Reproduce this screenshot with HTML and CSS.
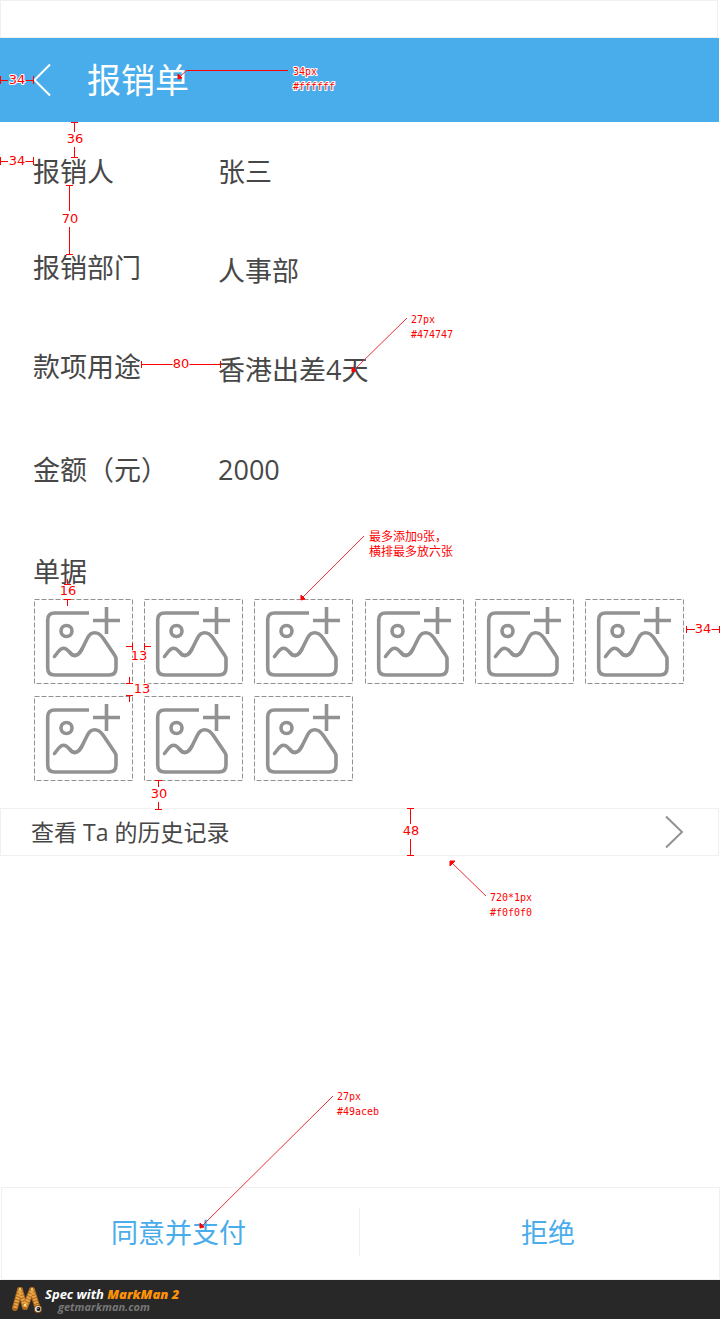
FILE: index.html
```html
<!DOCTYPE html>
<html lang="zh-CN">
<head>
<meta charset="utf-8">
<meta name="viewport" content="width=device-width, initial-scale=1">
<title>报销单</title>
<link rel="stylesheet" href="styles.css">
</head>
<body>
<svg class="defs" aria-hidden="true">
  <symbol id="add-photo" viewBox="0 0 99 85">
    <rect class="dash" x="0.5" y="0.5" width="98" height="84"/>
    <path class="thick flat" d="M55 14H20.700Q13.700 14 13.700 21V69Q13.700 76 20.700 76H75Q82 76 82 69V60Q82 58 80.500 56L69 39C64 32 57 32 53.500 39L48 50C44 58 39 58 35.500 53"/>
    <path class="thick" d="M48 50C44 58 39 58 35.500 53C31 48 28 48 24 53L20.500 57.500"/>
    <circle class="thick" cx="32.500" cy="32" r="5.500"/>
    <path class="thick flat" d="M72.500 8V35M59 21.500H86"/>
  </symbol>
</svg>
<div class="page">
  <div class="statusbar"></div>
  <header class="header">
    <button class="back" type="button" aria-label="返回"><svg width="18" height="34" viewBox="0 0 18 34"><path d="M17 1.500L1.500 17L17 32.500"/></svg></button>
    <h1 class="title">报销单</h1>
  </header>
  <main class="main">
    <dl class="fields">
      <div class="field"><dt>报销人</dt><dd>张三</dd></div>
      <div class="field field-low"><dt>报销部门</dt><dd>人事部</dd></div>
      <div class="field field-low"><dt>款项用途</dt><dd>香港出差4天</dd></div>
      <div class="field"><dt>金额（元）</dt><dd>2000</dd></div>
    </dl>
    <h2 class="subtitle">单据</h2>
    <div class="photos">
      <button class="photo" type="button" aria-label="添加单据 1"><svg><use href="#add-photo"/></svg></button>
      <button class="photo" type="button" aria-label="添加单据 2"><svg><use href="#add-photo"/></svg></button>
      <button class="photo" type="button" aria-label="添加单据 3"><svg><use href="#add-photo"/></svg></button>
      <button class="photo" type="button" aria-label="添加单据 4"><svg><use href="#add-photo"/></svg></button>
      <button class="photo" type="button" aria-label="添加单据 5"><svg><use href="#add-photo"/></svg></button>
      <button class="photo" type="button" aria-label="添加单据 6"><svg><use href="#add-photo"/></svg></button>
      <button class="photo" type="button" aria-label="添加单据 7"><svg><use href="#add-photo"/></svg></button>
      <button class="photo" type="button" aria-label="添加单据 8"><svg><use href="#add-photo"/></svg></button>
      <button class="photo" type="button" aria-label="添加单据 9"><svg><use href="#add-photo"/></svg></button>
    </div>
    <a class="history" href="#history"><span>查看 Ta 的历史记录</span><svg width="20" height="34" viewBox="0 0 20 34"><path d="M2 1.500L18 17L2 32.500"/></svg></a>
  </main>
  <div class="actions">
    <button class="action" type="button">同意并支付</button>
    <button class="action action-reject" type="button">拒绝</button>
  </div>
  <footer class="credit">
    <svg class="logo" width="32" height="30" viewBox="0 0 32 30" aria-hidden="true">
      <g class="worm"><path d="M4 23L9 5"/><path d="M9 5L14 22"/><path d="M14 22L21 5"/><path d="M21 5L27 24"/></g>
      <g class="rings"><path d="M4 23L9 5"/><path d="M9 5L14 22"/><path d="M14 22L21 5"/><path d="M21 5L27 24"/></g>
      <circle cx="27" cy="24" r="4" fill="#8f5516"/><circle cx="27" cy="24" r="3" fill="#eee"/><circle cx="27.500" cy="24" r="2" fill="#111"/><circle cx="27" cy="23.500" r="0.600" fill="#fff"/>
      <circle cx="9" cy="4" r="1" fill="#ffe28a"/><circle cx="21" cy="4" r="1" fill="#ffe28a"/><circle cx="14" cy="20" r="1.200" fill="#ffe28a"/>
    </svg>
    <div class="credit-text"><p class="credit-name">Spec with <b>MarkMan 2</b></p><p class="credit-site">getmarkman.com</p></div>
  </footer>

  <svg class="notes" width="720" height="1319" viewBox="0 0 720 1319">
    <g class="rule">
      <path d="M0.500 76V84M33.500 76V84M0 80.500H8M25 80.500H34"/>
      <path d="M0.500 157V165M33.500 157V165M0 161.500H8M25 161.500H34"/>
      <path d="M71 122.500H78M71 157.500H78M74.500 122V132M74.500 147V158"/>
      <path d="M66 185.500H73M66 254.500H73M69.500 185V211M69.500 227V254"/>
      <path d="M141.500 361V368M220.500 361V368M141 364.500H173M189 364.500H221"/>
      <path d="M64 584.500H71M67.500 579V584M64 599.500H71M67.500 599V606"/>
      <path d="M132.500 643V650M126 646.500H133M144.500 643V650M144 646.500H151"/>
      <path d="M126 683.500H133M129.500 677V684M126 695.500H133M129.500 695V702"/>
      <path d="M155 780.500H162M158.500 780V787M155 809.500H162M158.500 802V809"/>
      <path d="M407 808.500H414M407 855.500H414M410.500 808V824M410.500 839V855"/>
      <path d="M686.500 626V633M719.500 626V633M686 629.500H695M711 629.500H720"/>
      <path d="M288 70.500H186"/>
    </g>
    <g class="pointer">
      <path d="M186.500 70.500L179.500 77"/><path d="M407 318L354 370"/><path d="M364 536L302 598"/><path d="M486 896L451 862"/><path d="M333 1096L202 1226"/>
    </g>
    <g class="head">
      <path d="M178 74L182 78L178 79Z"/><path d="M352 367L356 371L352 372Z"/><path d="M301 595L305 599L301 600Z"/><path d="M450 861H455L450 866Z"/><path d="M200 1223L204 1227L200 1228Z"/>
    </g>
    <g class="num">
      <text x="17" y="84">34</text><text x="17" y="165">34</text><text x="75" y="143">36</text><text x="70" y="223">70</text><text x="181" y="368">80</text>
      <text x="68" y="595">16</text><text x="139" y="660">13</text><text x="142" y="693">13</text><text x="159" y="798">30</text><text x="411" y="835">48</text><text x="703" y="633">34</text>
    </g>
    <g class="memo">
      <text x="293" y="75">34px</text><text x="293" y="90">#ffffff</text>
      <text x="411" y="323">27px</text><text x="411" y="338">#474747</text>
      <text x="490" y="901">720*1px</text><text x="490" y="916">#f0f0f0</text>
      <text x="337" y="1100">27px</text><text x="337" y="1115">#49aceb</text>
    </g>
    <g class="memo memo-zh"><text x="369" y="541">最多添加9张，</text><text x="369" y="556">横排最多放六张</text></g>
  </svg>
</div>
</body>
</html>
```
FILE: styles.css
```css
* { box-sizing: border-box; margin: 0; padding: 0; }
body {
  background: #fff;
  color: #474747;
  font-family: "Open Sans", "Noto Sans CJK SC", sans-serif;
  font-size: 27px;
  font-weight: 380;
}
button { border: 0; background: none; font: inherit; color: inherit; cursor: pointer; }
.defs { position: absolute; width: 0; height: 0; }
.page { position: relative; display: flex; flex-direction: column; min-height: 100vh; overflow: hidden; }
.statusbar { height: 38px; margin-right: 2px; border: 1px solid #f0f0f0; }
.header { display: flex; align-items: center; gap: 36px; height: 84px; margin-right: 1px; padding-left: 33px; background: #49aceb; color: #fff; }
.back { display: flex; }
.back path { fill: none; stroke: #fff; stroke-width: 2; }
.title { font-size: 34px; font-weight: 380; line-height: 48px; }

.fields { display: grid; grid-template-rows: 96px 99px 103px 102px; padding: 30px 33px 0; }
.field { display: grid; grid-template-columns: 185px 1fr; align-items: start; line-height: 40px; }
.field-low dd { line-height: 46px; }
.subtitle { padding-left: 33px; font-size: 27px; font-weight: 380; line-height: 40px; }
.photos { display: grid; grid-template-columns: repeat(6, minmax(0, 99px)); justify-content: space-between; row-gap: 12px; padding: 7px 36px 0 34px; }
.photo { display: flex; height: 85px; }
.photo svg { width: 100%; height: 85px; }
.dash { fill: none; stroke: #929292; stroke-dasharray: 5 2; }
.thick { fill: none; stroke: #929292; stroke-width: 3.6; stroke-linecap: round; stroke-linejoin: round; }
.flat { stroke-linecap: butt; }
.history { display: flex; align-items: center; justify-content: space-between; height: 48px; margin: 27px 1px 0 0; padding: 0 34px 0 30px; border: 1px solid #f0f0f0; color: #474747; font-size: 23px; line-height: 32px; text-decoration: none; }
.history path { fill: none; stroke: #929292; stroke-width: 2; }

.actions { display: grid; grid-template-columns: 357fr 360fr; height: 93px; margin: auto 0 0 1px; border: 1px solid #f0f0f0; }
.action { padding: 0 4px 4px 0; color: #49aceb; }
.action-reject { padding-left: 22px; background: linear-gradient(#f0f0f0, #f0f0f0) left 20px / 1px 48px no-repeat; }
.credit { display: flex; align-items: center; gap: 2px; height: 39px; padding-left: 11px; background: #282828; font-family: "Open Sans", sans-serif; font-style: italic; font-weight: 700; }
.worm path { fill: none; stroke: #a9681f; stroke-width: 6; stroke-linecap: round; }
.rings path { fill: none; stroke: #e8a445; stroke-width: 4; stroke-dasharray: 2 1; }
.credit-name { color: #fff; font-size: 13px; line-height: 14px; }
.credit-name b { color: #ff9307; }
.credit-site { padding-left: 13px; color: #777; font-size: 11px; line-height: 12px; }

.notes { position: absolute; top: 0; left: 0; pointer-events: none; font-weight: 400; }
.rule { fill: none; stroke: #f00; shape-rendering: crispEdges; }
.pointer { fill: none; stroke: #e8303a; }
.head { fill: #f00; stroke: #f00; }
.num, .memo { fill: #f00; stroke: #fff; stroke-width: 2px; stroke-linejoin: round; paint-order: stroke; }
.num { font-family: "DejaVu Sans", sans-serif; font-size: 13px; text-anchor: middle; }
.memo { font-family: "DejaVu Sans Mono", monospace; font-size: 10px; }
.memo-zh { font-family: "Liberation Serif", "Noto Sans CJK SC", serif; font-size: 12px; }
```
